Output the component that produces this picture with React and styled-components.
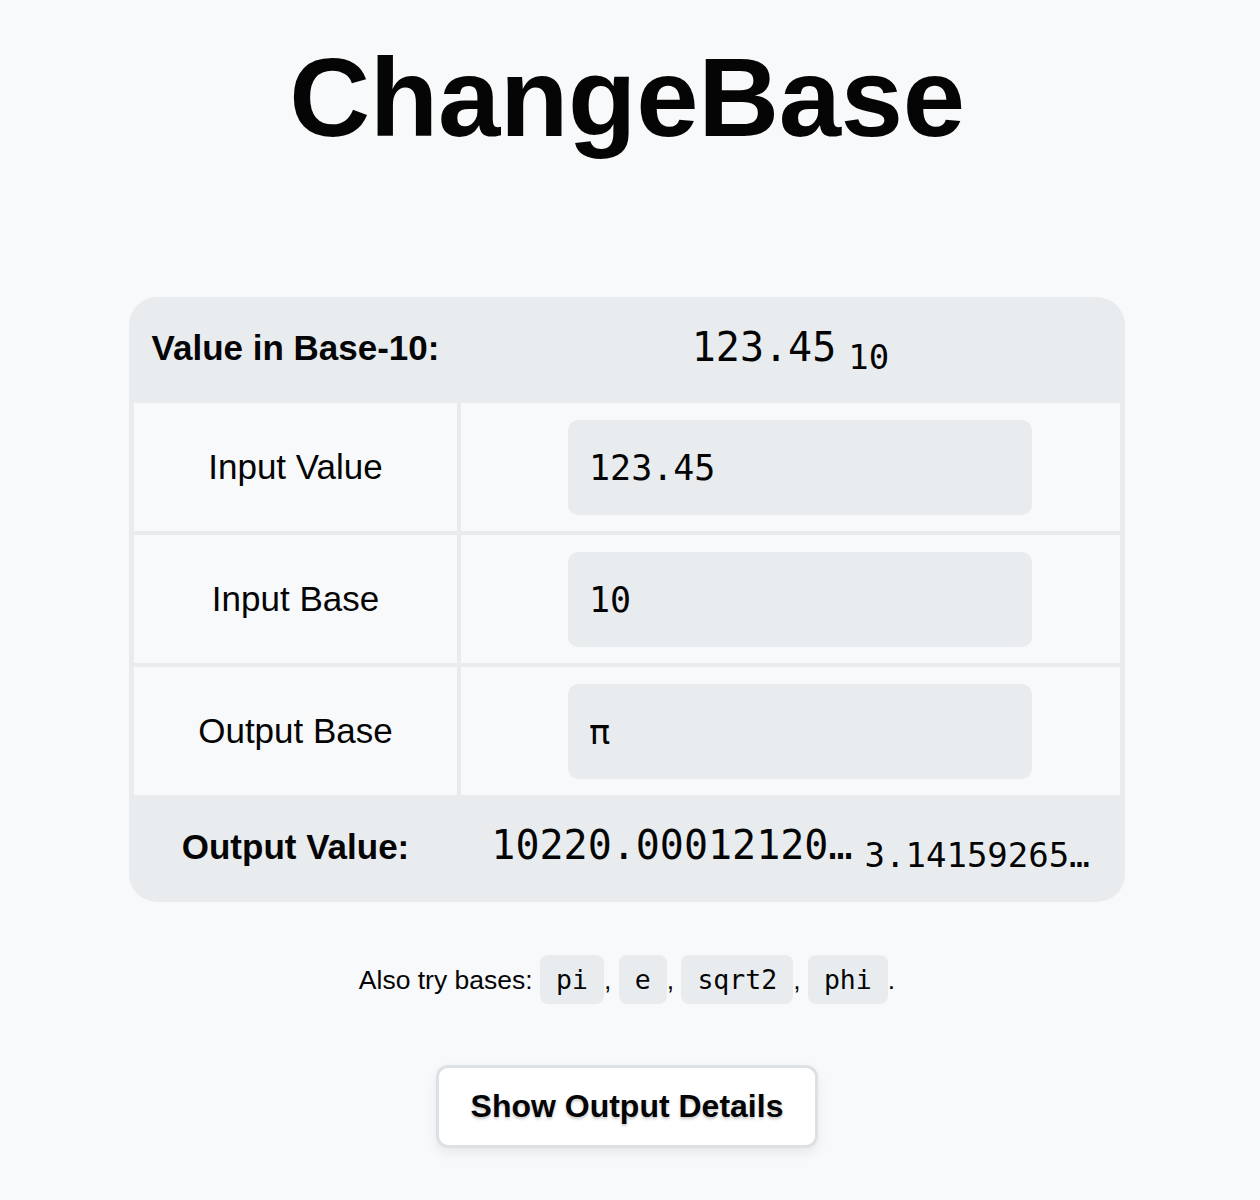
import React from 'react';
import styled, { createGlobalStyle } from 'styled-components';

const GlobalStyle = createGlobalStyle`
  html, body { margin: 0; padding: 0; background: #f8f9fa; }
  body { font-family: "Liberation Sans", Arial, sans-serif; color: #050505; }
`;

const Page = styled.main`
  width: 1254px;
  display: flex;
  flex-direction: column;
  align-items: center;
  padding-bottom: 40px;
`;

const Title = styled.h1`
  margin: 0;
  padding-top: 42px;
  font-size: 112px;
  line-height: 112px;
  font-weight: 700;
  letter-spacing: -0.3px;
`;

const Card = styled.section`
  margin-top: 143px;
  width: 996px;
  box-sizing: border-box;
  padding: 0 5px;
  background: #e9ecef;
  border-radius: 28px;
`;

const Grid = styled.div`
  display: grid;
  grid-template-columns: 323px 659px;
  gap: 4px;
`;

const SummaryRow = styled(Grid)`
  height: ${p => p.$h}px;
  align-items: center;
`;

const SummaryLabel = styled.div`
  text-align: center;
  font-weight: 700;
  font-size: 35px;
  transform: translateY(-2px);
`;

const SummaryValue = styled.div`
  text-align: center;
  white-space: nowrap;
  font-family: "DejaVu Sans Mono", "Liberation Mono", monospace;
  font-size: 40px;
`;

const Sub = styled.span`
  font-size: 34px;
  vertical-align: -8px;
  margin-left: ${p => p.$gap}px;
`;

const LabelCell = styled.div`
  background: #f8f9fa;
  display: flex;
  align-items: center;
  justify-content: center;
  font-size: 35px;
`;

const FieldCell = styled.div`
  background: #f8f9fa;
  padding: 17px 88px 16px 107px;
`;

const Field = styled.input`
  display: block;
  box-sizing: border-box;
  width: 464px;
  height: 95px;
  border: none;
  outline: none;
  border-radius: 10px;
  background: #e9ecef;
  padding: 0 21px;
  font-family: "DejaVu Sans Mono", "Liberation Mono", monospace;
  font-size: 35px;
  color: #050505;
`;

const Hint = styled.p`
  margin: 53px 0 0;
  font-size: 26.5px;
`;

const Chip = styled.code`
  display: inline-block;
  padding: 9px 16px;
  border-radius: 8px;
  background: #e9ecef;
  font-family: "DejaVu Sans Mono", "Liberation Mono", monospace;
  font-size: 26.5px;
`;

const DetailsButton = styled.button`
  margin-top: 61px;
  width: 382px;
  height: 83px;
  box-sizing: border-box;
  background: #fff;
  border: 3px solid #dde0e4;
  border-radius: 12px;
  box-shadow: 0 5px 12px rgba(0, 0, 0, 0.07);
  font-family: "Liberation Sans", Arial, sans-serif;
  font-weight: 700;
  font-size: 32px;
  color: #050505;
  text-shadow: 0 2px 3px rgba(0, 0, 0, 0.22);
  cursor: pointer;
`;

const rows = [
  { label: 'Input Value', value: '123.45' },
  { label: 'Input Base', value: '10' },
  { label: 'Output Base', value: 'π' },
];

const bases = ['pi', 'e', 'sqrt2', 'phi'];

export default function App() {
  return (
    <>
      <GlobalStyle />
      <Page>
        <Title>ChangeBase</Title>
        <Card>
          <SummaryRow $h={106}>
            <SummaryLabel>Value in Base-10:</SummaryLabel>
            <SummaryValue>
              123.45<Sub $gap={12}>10</Sub>
            </SummaryValue>
          </SummaryRow>
          <Grid>
            {rows.map(r => (
              <React.Fragment key={r.label}>
                <LabelCell>{r.label}</LabelCell>
                <FieldCell>
                  <Field defaultValue={r.value} readOnly />
                </FieldCell>
              </React.Fragment>
            ))}
          </Grid>
          <SummaryRow $h={107}>
            <SummaryLabel>Output Value:</SummaryLabel>
            <SummaryValue>
              10220.00012120…<Sub $gap={12}>3.14159265…</Sub>
            </SummaryValue>
          </SummaryRow>
        </Card>
        <Hint>
          Also try bases:{' '}
          {bases.map((b, i) => (
            <React.Fragment key={b}>
              <Chip>{b}</Chip>
              {i < bases.length - 1 ? ', ' : '.'}
            </React.Fragment>
          ))}
        </Hint>
        <DetailsButton>Show Output Details</DetailsButton>
      </Page>
    </>
  );
}
